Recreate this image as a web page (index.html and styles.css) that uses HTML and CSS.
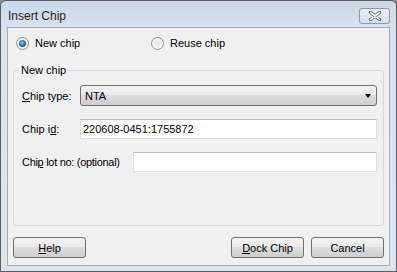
FILE: index.html
```html
<!DOCTYPE html>
<html>
<head>
<meta charset="utf-8">
<title>Insert Chip</title>
<link rel="stylesheet" href="styles.css">
</head>
<body>
<div class="window">
  <div class="titlebar">
    <span class="title">Insert Chip</span>
    <span class="close">
      <svg width="14" height="10" viewBox="0 0 14 10">
        <path d="M2.5 1.5 L11.5 8.5 M11.5 1.5 L2.5 8.5" stroke="#56647a" stroke-width="3.4" stroke-linecap="round" fill="none"/>
        <path d="M2.5 1.5 L11.5 8.5 M11.5 1.5 L2.5 8.5" stroke="#ffffff" stroke-width="1.6" stroke-linecap="round" fill="none"/>
      </svg>
    </span>
  </div>

  <div class="client">
    <div class="options">
      <label class="option first"><span class="radio checked"></span>New chip</label>
      <label class="option"><span class="radio"></span>Reuse chip</label>
    </div>

    <fieldset class="group">
      <legend>New chip</legend>
      <div class="group-body">
        <div class="row">
          <span class="label"><u>C</u>hip type:</span>
          <div class="combo">
            <span class="combo-text">NTA</span>
            <span class="arrow"></span>
          </div>
        </div>
        <div class="row">
          <span class="label">Chip i<u>d</u>:</span>
          <input class="field" type="text" value="220608-0451:1755872">
        </div>
        <div class="row">
          <span class="label wide">Chi<u>p</u> lot no: (optional)</span>
          <input class="field" type="text" value="">
        </div>
      </div>
    </fieldset>

    <div class="buttons">
      <button class="btn"><u>H</u>elp</button>
      <span class="spacer"></span>
      <button class="btn"><u>D</u>ock Chip</button>
      <button class="btn">Cancel</button>
    </div>
  </div>
</div>
</body>
</html>
```

FILE: styles.css
```css
html, body {
   margin: 0;
   padding: 0;
   background-color: #8c8c8c;
}

body {
   font-family: "Liberation Sans", Arial, sans-serif;
   font-size: 11px;
   color: #000;
}

.window {
   box-sizing: border-box;
   width: 397px;
   height: 272px;
   border: 1px solid #5a5d62;
   border-radius: 6px 6px 0 0;
   background: linear-gradient(#cdd9e8, #d9e3ee 30px, #dde4ec);
   padding: 0 6px 5px 6px;
   display: flex;
   flex-direction: column;
}

.titlebar {
   height: 26px;
   display: flex;
   align-items: flex-start;
   justify-content: space-between;
}

.title {
   font-size: 12px;
   color: #1f1f1f;
   padding: 8px 0 0 1px;
   line-height: 14px;
}

.close {
   box-sizing: border-box;
   width: 31px;
   height: 16px;
   margin-top: 7px;
   border: 1px solid #8d99aa;
   border-radius: 3px;
   background: linear-gradient(#e9eff6, #d6e0ec);
   display: flex;
   align-items: center;
   justify-content: center;
}

.close svg {
   display: block;
}

.client {
   flex: 1;
   background-color: #f0f0f0;
   border: 1px solid #a3adba;
   padding: 0 5px 7px 5px;
   display: flex;
   flex-direction: column;
}

.options {
   height: 30px;
   display: flex;
   align-items: center;
   padding-left: 3px;
}

.option {
   display: flex;
   align-items: center;
}

.option.first {
   width: 135px;
}

.radio {
   box-sizing: border-box;
   width: 13px;
   height: 13px;
   border: 1px solid #939393;
   border-radius: 50%;
   background: radial-gradient(circle at 50% 50%, #e4e4e4, #f6f6f6 70%);
   margin-right: 6px;
   display: flex;
   align-items: center;
   justify-content: center;
}

.radio.checked::after {
   content: "";
   width: 7px;
   height: 7px;
   border-radius: 50%;
   background: radial-gradient(circle at 45% 40%, #8fd0f6, #2b78b8 45%, #0b3768);
}

.group {
   flex: 1;
   margin: 6px 0 0 0;
   padding: 0;
   border: 1px solid #d2d8de;
   border-radius: 3px;
   min-width: 0;
}

.group legend {
   margin-left: 5px;
   padding: 0 2px;
   line-height: 13px;
}

.group-body {
   padding: 8px 6px 0 8px;
}

.row {
   display: flex;
   align-items: center;
   margin-bottom: 13px;
}

.label {
   width: 58px;
   flex: none;
}

.label.wide {
   width: 111px;
   letter-spacing: -0.3px;
}

.combo {
   box-sizing: border-box;
   flex: 1;
   height: 21px;
   border: 1px solid #707070;
   border-radius: 3px;
   background: linear-gradient(#f2f2f2, #ebebeb 50%, #dddddd 50%, #cfcfcf);
   display: flex;
   align-items: center;
   padding: 0 5px 0 4px;
}

.combo-text {
   flex: 1;
}

.arrow {
   width: 0;
   height: 0;
   border-left: 3.5px solid transparent;
   border-right: 3.5px solid transparent;
   border-top: 4px solid #000;
   margin-top: 1px;
}

.field {
   box-sizing: border-box;
   flex: 1;
   min-width: 0;
   height: 20px;
   margin: 0;
   border: 1px solid #dbdfe6;
   border-top-color: #b9bec6;
   background-color: #fff;
   padding: 0 2px;
   font-family: "Liberation Sans", Arial, sans-serif;
   font-size: 11px;
   color: #000;
   outline: none;
}

.buttons {
   display: flex;
   gap: 7px;
   margin-top: 11px;
}

.spacer {
   flex: 1;
}

.btn {
   box-sizing: border-box;
   width: 73px;
   height: 21px;
   margin: 0;
   padding: 0;
   border: 1px solid #707070;
   border-radius: 3px;
   background: linear-gradient(#f2f2f2, #ebebeb 50%, #dddddd 50%, #cfcfcf);
   font-family: "Liberation Sans", Arial, sans-serif;
   font-size: 11px;
   color: #000;
}
```
